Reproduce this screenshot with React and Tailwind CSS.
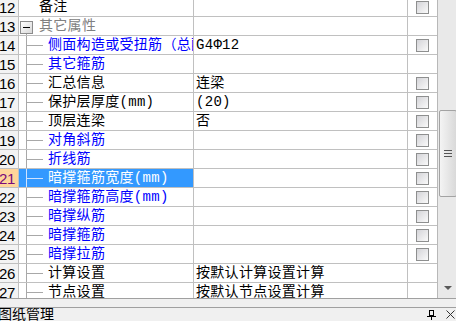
import React from "react";

const rows = [
  { n: 12, t: "备注", c: "k", lvl: 0, v: "", cb: true },
  { n: 13, t: "其它属性", c: "g", lvl: -1, v: "", cb: false },
  { n: 14, t: "侧面构造或受扭筋（总配筋值）", c: "b", lvl: 1, v: "G4Φ12", cb: true },
  { n: 15, t: "其它箍筋", c: "b", lvl: 1, v: "", cb: false },
  { n: 16, t: "汇总信息", c: "k", lvl: 1, v: "连梁", cb: true },
  { n: 17, t: "保护层厚度(mm)", c: "k", lvl: 1, v: "(20)", cb: true },
  { n: 18, t: "顶层连梁", c: "k", lvl: 1, v: "否", cb: true },
  { n: 19, t: "对角斜筋", c: "b", lvl: 1, v: "", cb: true },
  { n: 20, t: "折线筋", c: "b", lvl: 1, v: "", cb: true },
  { n: 21, t: "暗撑箍筋宽度(mm)", c: "b", lvl: 1, v: "", cb: true, sel: true },
  { n: 22, t: "暗撑箍筋高度(mm)", c: "b", lvl: 1, v: "", cb: true },
  { n: 23, t: "暗撑纵筋", c: "b", lvl: 1, v: "", cb: true },
  { n: 24, t: "暗撑箍筋", c: "b", lvl: 1, v: "", cb: true },
  { n: 25, t: "暗撑拉筋", c: "b", lvl: 1, v: "", cb: true },
  { n: 26, t: "计算设置", c: "k", lvl: 1, v: "按默认计算设置计算", cb: false },
  { n: 27, t: "节点设置", c: "k", lvl: 1, v: "按默认节点设置计算", cb: false },
];

function Check() {
  return (
    <div className="w-[13px] h-[13px] border border-[#8e8f8f] bg-gradient-to-br from-[#d4d4d8] to-[#fafafa]" />
  );
}

function Row({ r }) {
  const sel = r.sel;
  const color = sel
    ? "text-white"
    : r.c === "b"
    ? "text-[#0000ff]"
    : r.c === "g"
    ? "text-[#808080]"
    : "text-black";
  const lineColor = sel ? "bg-[#cfe3ff]" : "bg-[#a8a8a8]";
  return (
    <div className="flex h-[19px] border-b border-[#c0c0c0] box-border">
      <div
        className={
          "w-[19px] shrink-0 border-r border-[#c0c0c0] overflow-hidden flex items-center font-['Liberation_Sans',sans-serif] text-[15px] leading-none " +
          (sel ? "bg-[#ffd59a] text-[#7a0a7a]" : "bg-[#f3f3f3] text-black")
        }
      >
        <span className="-ml-[1px] tracking-[-0.3px]">{r.n}</span>
      </div>
      <div
        className={
          "relative w-[175px] shrink-0 border-r border-[#c0c0c0] overflow-hidden " +
          (sel ? "bg-[#3399ff]" : "bg-white")
        }
      >
        {r.lvl === 1 && (
          <>
            <div className={"absolute left-[7px] top-0 bottom-0 w-px " + lineColor} />
            <div className={"absolute left-[7px] top-[9px] w-[17px] h-px " + lineColor} />
          </>
        )}
        {r.lvl === -1 && (
          <>
            <div className="absolute left-[7px] top-[16px] bottom-0 w-px bg-[#a8a8a8]" />
            <div className="absolute left-[1px] top-[4px] w-[13px] h-[13px] border border-[#8c8c8c] bg-gradient-to-br from-white to-[#d8d8d8] flex items-center justify-center">
              <div className="w-[7px] h-px bg-black" />
            </div>
          </>
        )}
        <div
          className={
            "h-full flex items-center whitespace-nowrap text-[14px] leading-none tracking-[0.3px] " +
            (r.lvl === 1 ? "pl-[29px] " : "pl-[20px] ") +
            color
          }
        >
          {r.t}
        </div>
      </div>
      <div className="w-[214px] shrink-0 border-r border-[#c0c0c0] bg-white flex items-center pl-[2px] text-[14px] leading-none tracking-[0.3px] text-black whitespace-nowrap overflow-hidden">
        {r.v}
      </div>
      <div className="w-[29px] shrink-0 bg-white flex items-center pl-[8px]">
        {r.cb && <Check />}
      </div>
    </div>
  );
}

export default function App() {
  return (
    <div className="w-[456px] h-[321px] bg-[#f0f0f0] flex flex-col overflow-hidden font-['Liberation_Mono','Noto_Sans_CJK_SC',monospace]">
      <div className="flex h-[299px] shrink-0 border-b border-[#a0a0a0]">
        <div className="w-[438px] h-full overflow-hidden bg-white border-r border-[#b8b8b8]">
          <div className="-mt-[2px]">
            {rows.map((r) => (
              <Row key={r.n} r={r} />
            ))}
          </div>
        </div>
        <div className="w-[18px] h-full bg-[#e9e9e9] flex flex-col">
          <div className="h-[110px] shrink-0" />
          <div className="h-[87px] shrink-0 ml-[1px] w-[18px] border border-[#a3a3a3] rounded-[2px] bg-gradient-to-r from-[#f4f4f4] to-[#d9d9d9] flex flex-col items-center justify-center gap-[2px]">
            <div className="w-[8px] h-px bg-[#555]" />
            <div className="w-[8px] h-px bg-[#555]" />
            <div className="w-[8px] h-px bg-[#555]" />
          </div>
          <div className="flex-1" />
          <div className="h-[18px] shrink-0 flex items-start justify-center pt-[6px] pl-[1px]">
            <svg width="8" height="4" viewBox="0 0 8 4">
              <polygon points="0,0 8,0 4,4" fill="#5a5a5a" />
            </svg>
          </div>
        </div>
      </div>
      <div className="h-[8px] shrink-0 bg-[#f0f0f0]" />
      <div className="h-px shrink-0 bg-[#a0a0a0]" />
      <div className="flex-1 flex items-center justify-between bg-[#f0f0f0] overflow-hidden">
        <span className="-ml-[2px] text-[14px] leading-none text-black">图纸管理</span>
        <div className="flex items-center gap-[10px] pr-[1px]">
          <svg width="9" height="10" viewBox="0 0 9 10">
            <rect x="2.5" y="0.5" width="4" height="5" fill="none" stroke="#000" />
            <line x1="0" y1="6.5" x2="9" y2="6.5" stroke="#000" />
            <line x1="4.5" y1="6.5" x2="4.5" y2="10" stroke="#000" />
          </svg>
          <svg width="9" height="9" viewBox="0 0 9 9">
            <line x1="0.5" y1="0.5" x2="8.5" y2="8.5" stroke="#333" />
            <line x1="8.5" y1="0.5" x2="0.5" y2="8.5" stroke="#333" />
          </svg>
        </div>
      </div>
    </div>
  );
}
